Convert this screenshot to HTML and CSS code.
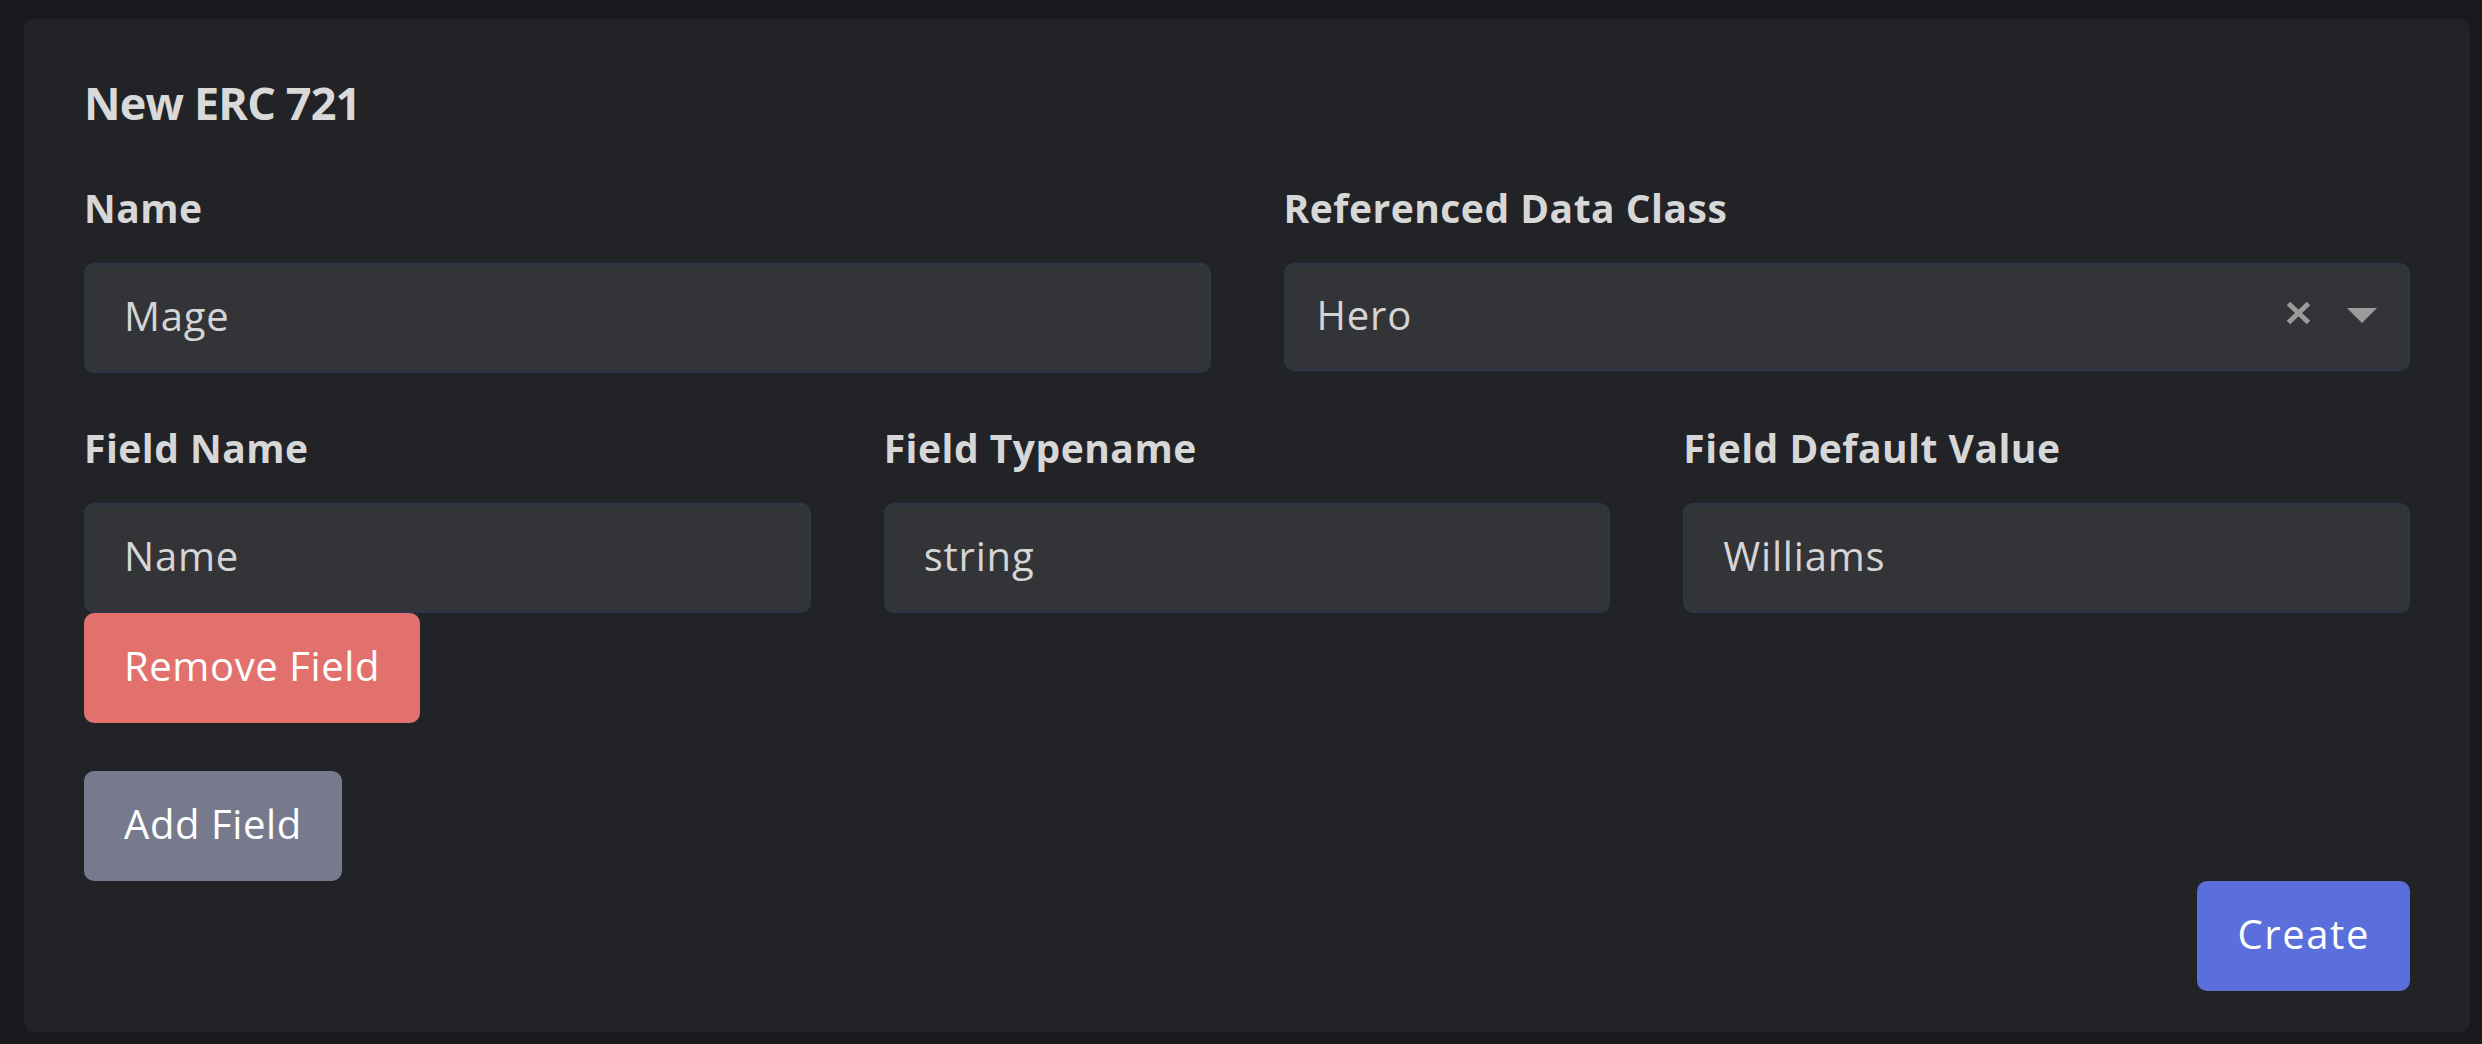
FILE: index.html
```html
<!DOCTYPE html>
<html lang="en">
<head>
<meta charset="utf-8">
<title>New ERC 721</title>
<link rel="stylesheet" href="styles.css">
</head>
<body>
<div class="page">
  <div class="card">
    <h2 class="title">New ERC 721</h2>
    <div class="row row-two">
      <div class="field">
        <div class="label">Name</div>
        <div class="input">Mage</div>
      </div>
      <div class="field">
        <div class="label">Referenced Data Class</div>
        <div class="input select">
          <span class="value">Hero</span>
          <span class="icons">
            <svg class="icon-x" width="25" height="24" viewBox="0 0 25 24"><path d="M2.5 2.5 L22.5 21.5 M22.5 2.5 L2.5 21.5" stroke="#9b9b9b" stroke-width="5" fill="none"/></svg>
            <svg class="icon-caret" width="30" height="15" viewBox="0 0 30 15"><path d="M0 0 L30 0 L15 15 Z" fill="#9b9b9b"/></svg>
          </span>
        </div>
      </div>
    </div>
    <div class="row row-three">
      <div class="field">
        <div class="label">Field Name</div>
        <div class="input">Name</div>
      </div>
      <div class="field">
        <div class="label">Field Typename</div>
        <div class="input">string</div>
      </div>
      <div class="field">
        <div class="label">Field Default Value</div>
        <div class="input">Williams</div>
      </div>
    </div>
    <button class="btn btn-red">Remove Field</button>
    <button class="btn btn-gray btn-add">Add Field</button>
    <div class="actions">
      <button class="btn btn-blue">Create</button>
    </div>
  </div>
</div>
</body>
</html>
```

FILE: styles.css
```css
html, body {
  margin: 0;
  padding: 0;
  background: #19191d;
}

body {
  font-family: "Open Sans", "Noto Sans", sans-serif;
  width: 2482px;
  height: 1044px;
  overflow: hidden;
}

.page {
  padding: 19px 12px 0 24px;
}

.card {
  box-sizing: border-box;
  width: 2446px;
  height: 1013px;
  background: #222327;
  border-radius: 10px;
  padding: 61px 60px 41px 60px;
  display: flex;
  flex-direction: column;
  align-items: flex-start;
}

.title {
  margin: 0 0 63px 0;
  font-size: 45px;
  line-height: 45px;
  font-weight: 700;
  letter-spacing: -0.85px;
  color: #d9d9d9;
}

.row {
  align-self: stretch;
  display: grid;
  column-gap: 73px;
}

.row-two {
  grid-template-columns: 1fr 1fr;
  margin-bottom: 55px;
}

.row-three {
  grid-template-columns: 1fr 1fr 1fr;
}

.field {
  display: flex;
  flex-direction: column;
  min-width: 0;
}

.label {
  font-size: 39px;
  line-height: 39px;
  font-weight: 700;
  letter-spacing: 0.5px;
  color: #d7d7d7;
  margin-bottom: 36px;
}

.input {
  box-sizing: border-box;
  height: 110px;
  background: #333438;
  border: 2px solid #2e3548;
  border-radius: 10px;
  padding: 0 38px 6px 38px;
  display: flex;
  align-items: center;
  font-size: 40px;
  font-weight: 400;
  letter-spacing: 0.8px;
  color: #d5d5d5;
}

.select {
  height: 108px;
  padding: 0 31px 6px 31px;
}

.value {
  flex: 1;
}

.icons {
  display: flex;
  align-items: center;
  margin-bottom: 2px;
}

.icon-x {
  display: block;
  margin-right: 36px;
}

.icon-caret {
  display: block;
  margin-top: 4px;
}

.btn {
  box-sizing: border-box;
  height: 110px;
  padding: 0 40px 6px 40px;
  border: none;
  border-radius: 10px;
  font-family: "Open Sans", "Noto Sans", sans-serif;
  font-size: 40px;
  font-weight: 500;
  letter-spacing: 0.6px;
  color: #ffffff;
  display: flex;
  align-items: center;
  justify-content: center;
  cursor: pointer;
}

.btn-red {
  background: #e2716e;
}

.btn-gray {
  background: #777a8c;
}

.btn-add {
  margin-top: 48px;
}

.btn-blue {
  background: #5a6fdc;
  letter-spacing: 1.6px;
}

.actions {
  align-self: stretch;
  display: flex;
  justify-content: flex-end;
}
```
